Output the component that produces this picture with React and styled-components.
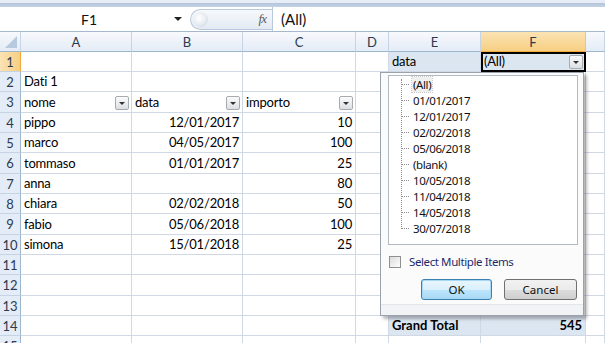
import React from 'react';
import styled, { createGlobalStyle, css } from 'styled-components';

const GlobalStyle = createGlobalStyle`
  html, body {
    margin: 0;
    padding: 0;
    background: #ffffff;
  }
  body {
    font-family: Lato, "Open Sans", sans-serif;
  }
`;

const Window = styled.div`
  position: relative;
  width: 605px;
  height: 343px;
  overflow: hidden;
  background: #fff;
`;

const TopBand = styled.div`
  height: 7px;
  background: linear-gradient(#e6edf6 0, #e6edf6 3px, #b4c5da 3px, #c3d2e4 7px);
`;

const FormulaBar = styled.div`
  height: 24px;
  display: flex;
  align-items: center;
  border-bottom: 1px solid #a6b8ce;
  background: #fff;
`;

const NameBox = styled.div`
  width: 186px;
  height: 100%;
  display: flex;
  align-items: center;
  font-size: 14px;
  color: #111;
  box-sizing: border-box;
`;

const NameText = styled.span`
  flex: 1;
  text-align: center;
  padding-left: 4px;
`;

const Caret = styled.span`
  width: 0;
  height: 0;
  border-left: 4px solid transparent;
  border-right: 4px solid transparent;
  border-top: 4px solid #222;
  margin-right: 4px;
`;

const Pill = styled.div`
  position: relative;
  width: 82px;
  height: 21px;
  margin-left: 4px;
  box-sizing: border-box;
  border: 1px solid #b9c8da;
  border-right: none;
  border-radius: 11px 0 0 11px;
  background: linear-gradient(#f6f9fc, #e3eaf3);
  display: flex;
  align-items: center;
  justify-content: flex-end;
  padding-right: 6px;
`;

const Knob = styled.span`
  position: absolute;
  left: 2px;
  top: 2px;
  width: 15px;
  height: 15px;
  border-radius: 50%;
  background: radial-gradient(circle at 40% 40%, #ffffff 0, #e6ebf1 55%, #c3ccd7 100%);
`;

const Fx = styled.span`
  font-family: "Liberation Serif", serif;
  font-style: italic;
  font-size: 13px;
  color: #5a5a5a;
  letter-spacing: -1px;
`;

const FormulaInput = styled.div`
  flex: 1;
  height: 100%;
  border-left: 1px solid #b9c8da;
  display: flex;
  align-items: center;
  padding-left: 8px;
  font-size: 15px;
  color: #111;
`;

const Sheet = styled.div`
  display: grid;
  grid-template-columns: 21px 111px 111px 113px 33px 92px 105px 1fr;
`;

const ColHead = styled.div`
  height: 20px;
  box-sizing: border-box;
  border-right: 1px solid #c5d3e3;
  border-bottom: 1px solid #9eb6ce;
  background: linear-gradient(#f7f9fc, #e4ecf7);
  color: #2b3a4f;
  font-size: 13px;
  display: flex;
  align-items: center;
  justify-content: center;
  ${p => p.$active && css`
    background: linear-gradient(#fbe3b4, #f6cf82);
    border-bottom-color: #f2a83d;
    border-right-color: #f2c56c;
  `}
`;

const Corner = styled(ColHead)`
  position: relative;
  &::after {
    content: '';
    position: absolute;
    right: 3px;
    bottom: 3px;
    border-left: 12px solid transparent;
    border-bottom: 12px solid #b7c9de;
  }
`;

const RowHead = styled.div`
  height: ${p => p.$h}px;
  box-sizing: border-box;
  border-right: 1px solid #9eb6ce;
  border-bottom: 1px solid #c5d3e3;
  background: #e4ecf7;
  color: #2b3a4f;
  font-size: 13px;
  display: flex;
  align-items: center;
  justify-content: center;
  ${p => p.$active && css`
    background: linear-gradient(90deg, #fbe3b4, #f6cf82);
    border-right-color: #f2a83d;
  `}
`;

const Cell = styled.div`
  position: relative;
  height: ${p => p.$h}px;
  box-sizing: border-box;
  border-right: 1px solid #d0d7e5;
  border-bottom: 1px solid #d0d7e5;
  display: flex;
  align-items: flex-end;
  justify-content: ${p => (p.$right ? 'flex-end' : 'flex-start')};
  padding: 0 3px 1px 3px;
  font-size: 13px;
  letter-spacing: -0.2px;
  line-height: 17px;
  color: #000;
  white-space: nowrap;
  ${p => p.$pivot && css`
    background: #dce6f1;
  `}
  ${p => p.$bold && css`
    font-weight: 700;
    letter-spacing: 0;
  `}
  ${p => p.$selected && css`
    outline: 2px solid #000;
    outline-offset: -2px;
  `}
`;

const FilterBtn = styled.span`
  position: absolute;
  right: 2px;
  bottom: 2px;
  width: 14px;
  height: 14px;
  box-sizing: border-box;
  border: 1px solid #a7abb0;
  border-radius: 2px;
  background: linear-gradient(#fbfbfb, #dcdfe3);
  display: flex;
  align-items: center;
  justify-content: center;
  &::after {
    content: '';
    border-left: 3px solid transparent;
    border-right: 3px solid transparent;
    border-top: 3px solid #333;
  }
`;

const Popup = styled.div`
  position: absolute;
  left: 380px;
  top: 72px;
  width: 204px;
  height: 244px;
  box-sizing: border-box;
  border: 1px solid #9aa3ad;
  background: #fbfbfb;
  box-shadow: 3px 3px 3px rgba(0, 0, 0, 0.28);
  display: flex;
  flex-direction: column;
  font-family: "Noto Sans", "Open Sans", sans-serif;
  letter-spacing: -0.4px;
`;

const ListBox = styled.div`
  margin: 2px 5px 0 7px;
  height: 170px;
  box-sizing: border-box;
  border: 1px solid #b3b9c1;
  background: #fff;
  position: relative;
  padding: 0 0 0 12px;
`;

const TreeLine = styled.div`
  position: absolute;
  left: 12px;
  top: 3px;
  height: 150px;
  border-left: 1px dotted #8c8c8c;
`;

const Item = styled.div`
  height: 16.1px;
  display: flex;
  align-items: center;
  font-size: 11.5px;
  color: #111;
  &::before {
    content: '';
    width: 8px;
    margin-right: 3px;
    border-top: 1px dotted #8c8c8c;
  }
`;

const ItemLabel = styled.span`
  padding: 0 1px;
  ${p => p.$focus && css`
    background: #f0f0f0;
    outline: 1px dotted #c8c8c8;
  `}
`;

const CheckRow = styled.div`
  display: flex;
  align-items: center;
  margin: 9px 0 0 8px;
  font-size: 11.5px;
  color: #1e2b6b;
`;

const Box = styled.span`
  width: 12px;
  height: 12px;
  box-sizing: border-box;
  border: 1px solid #8f8f8f;
  background: linear-gradient(135deg, #dcdcdc, #fdfdfd);
  margin-right: 8px;
`;

const Buttons = styled.div`
  display: flex;
  justify-content: flex-end;
  gap: 12px;
  margin: 10px 6px 0 0;
`;

const Button = styled.button`
  width: ${p => p.$w}px;
  height: 21px;
  box-sizing: border-box;
  border-radius: 3px;
  border: 1px solid ${p => (p.$primary ? '#3c7fb1' : '#707070')};
  background: linear-gradient(#f2f2f2 0, #ebebeb 50%, #dddddd 51%, #cfcfcf 100%);
  ${p => p.$primary && css`
    box-shadow: inset 0 0 0 1px #a6d8f3;
    background: linear-gradient(#eaf6fd 0, #d9f0fc 50%, #bee6fd 51%, #a7d9f5 100%);
  `}
  font-family: "Noto Sans", "Open Sans", sans-serif;
  font-size: 11.5px;
  color: #111;
  padding: 0;
`;

const Grip = styled.div`
  margin-top: auto;
  height: 10px;
  border-top: 1px solid #e2e6ea;
  background: #f1f3f5;
  position: relative;
  &::after {
    content: '';
    position: absolute;
    right: 2px;
    bottom: 2px;
    width: 5px;
    height: 5px;
    background:
      radial-gradient(circle, #9aa3ad 45%, transparent 50%) 3px 0 / 2px 2px no-repeat,
      radial-gradient(circle, #9aa3ad 45%, transparent 50%) 0 3px / 2px 2px no-repeat,
      radial-gradient(circle, #9aa3ad 45%, transparent 50%) 3px 3px / 2px 2px no-repeat;
  }
`;

const heights = [20, 20, 21, 20, 20, 21, 20, 20, 21, 20, 20, 21, 20, 20, 20];
const cols = ['A', 'B', 'C', 'D', 'E', 'F', 'G'];

const rows = {
  1: { E: { t: 'data', pivot: true }, F: { t: '(All)', pivot: true, selected: true, btn: true } },
  2: { A: { t: 'Dati 1' } },
  3: { A: { t: 'nome', btn: true }, B: { t: 'data', btn: true }, C: { t: 'importo', btn: true } },
  4: { A: { t: 'pippo' }, B: { t: '12/01/2017', r: true }, C: { t: '10', r: true } },
  5: { A: { t: 'marco' }, B: { t: '04/05/2017', r: true }, C: { t: '100', r: true } },
  6: { A: { t: 'tommaso' }, B: { t: '01/01/2017', r: true }, C: { t: '25', r: true } },
  7: { A: { t: 'anna' }, C: { t: '80', r: true } },
  8: { A: { t: 'chiara' }, B: { t: '02/02/2018', r: true }, C: { t: '50', r: true } },
  9: { A: { t: 'fabio' }, B: { t: '05/06/2018', r: true }, C: { t: '100', r: true } },
  10: { A: { t: 'simona' }, B: { t: '15/01/2018', r: true }, C: { t: '25', r: true } },
  14: { E: { t: 'Grand Total', pivot: true, bold: true }, F: { t: '545', pivot: true, bold: true, r: true } },
};

const items = ['(All)', '01/01/2017', '12/01/2017', '02/02/2018', '05/06/2018', '(blank)', '10/05/2018', '11/04/2018', '14/05/2018', '30/07/2018'];

export default function App() {
  return (
    <Window>
      <GlobalStyle />
      <TopBand />
      <FormulaBar>
        <NameBox>
          <NameText>F1</NameText>
          <Caret />
        </NameBox>
        <Pill>
          <Knob />
          <Fx>fx</Fx>
        </Pill>
        <FormulaInput>(All)</FormulaInput>
      </FormulaBar>
      <Sheet>
        <Corner />
        {cols.map(c => (
          <ColHead key={c} $active={c === 'F'}>{c === 'G' ? '' : c}</ColHead>
        ))}
        {heights.map((h, i) => {
          const n = i + 1;
          const data = rows[n] || {};
          return (
            <React.Fragment key={n}>
              <RowHead $h={h} $active={n === 1}>{n}</RowHead>
              {cols.map(c => {
                const d = data[c];
                return (
                  <Cell
                    key={c}
                    $h={h}
                    $right={d && d.r}
                    $pivot={d && d.pivot}
                    $bold={d && d.bold}
                    $selected={d && d.selected}
                  >
                    {d && d.t}
                    {d && d.btn && <FilterBtn />}
                  </Cell>
                );
              })}
            </React.Fragment>
          );
        })}
      </Sheet>
      <Popup>
        <ListBox>
          <TreeLine />
          {items.map((it, i) => (
            <Item key={it}>
              <ItemLabel $focus={i === 0}>{it}</ItemLabel>
            </Item>
          ))}
        </ListBox>
        <CheckRow>
          <Box />
          Select Multiple Items
        </CheckRow>
        <Buttons>
          <Button $w={71} $primary>OK</Button>
          <Button $w={73}>Cancel</Button>
        </Buttons>
        <Grip />
      </Popup>
    </Window>
  );
}
